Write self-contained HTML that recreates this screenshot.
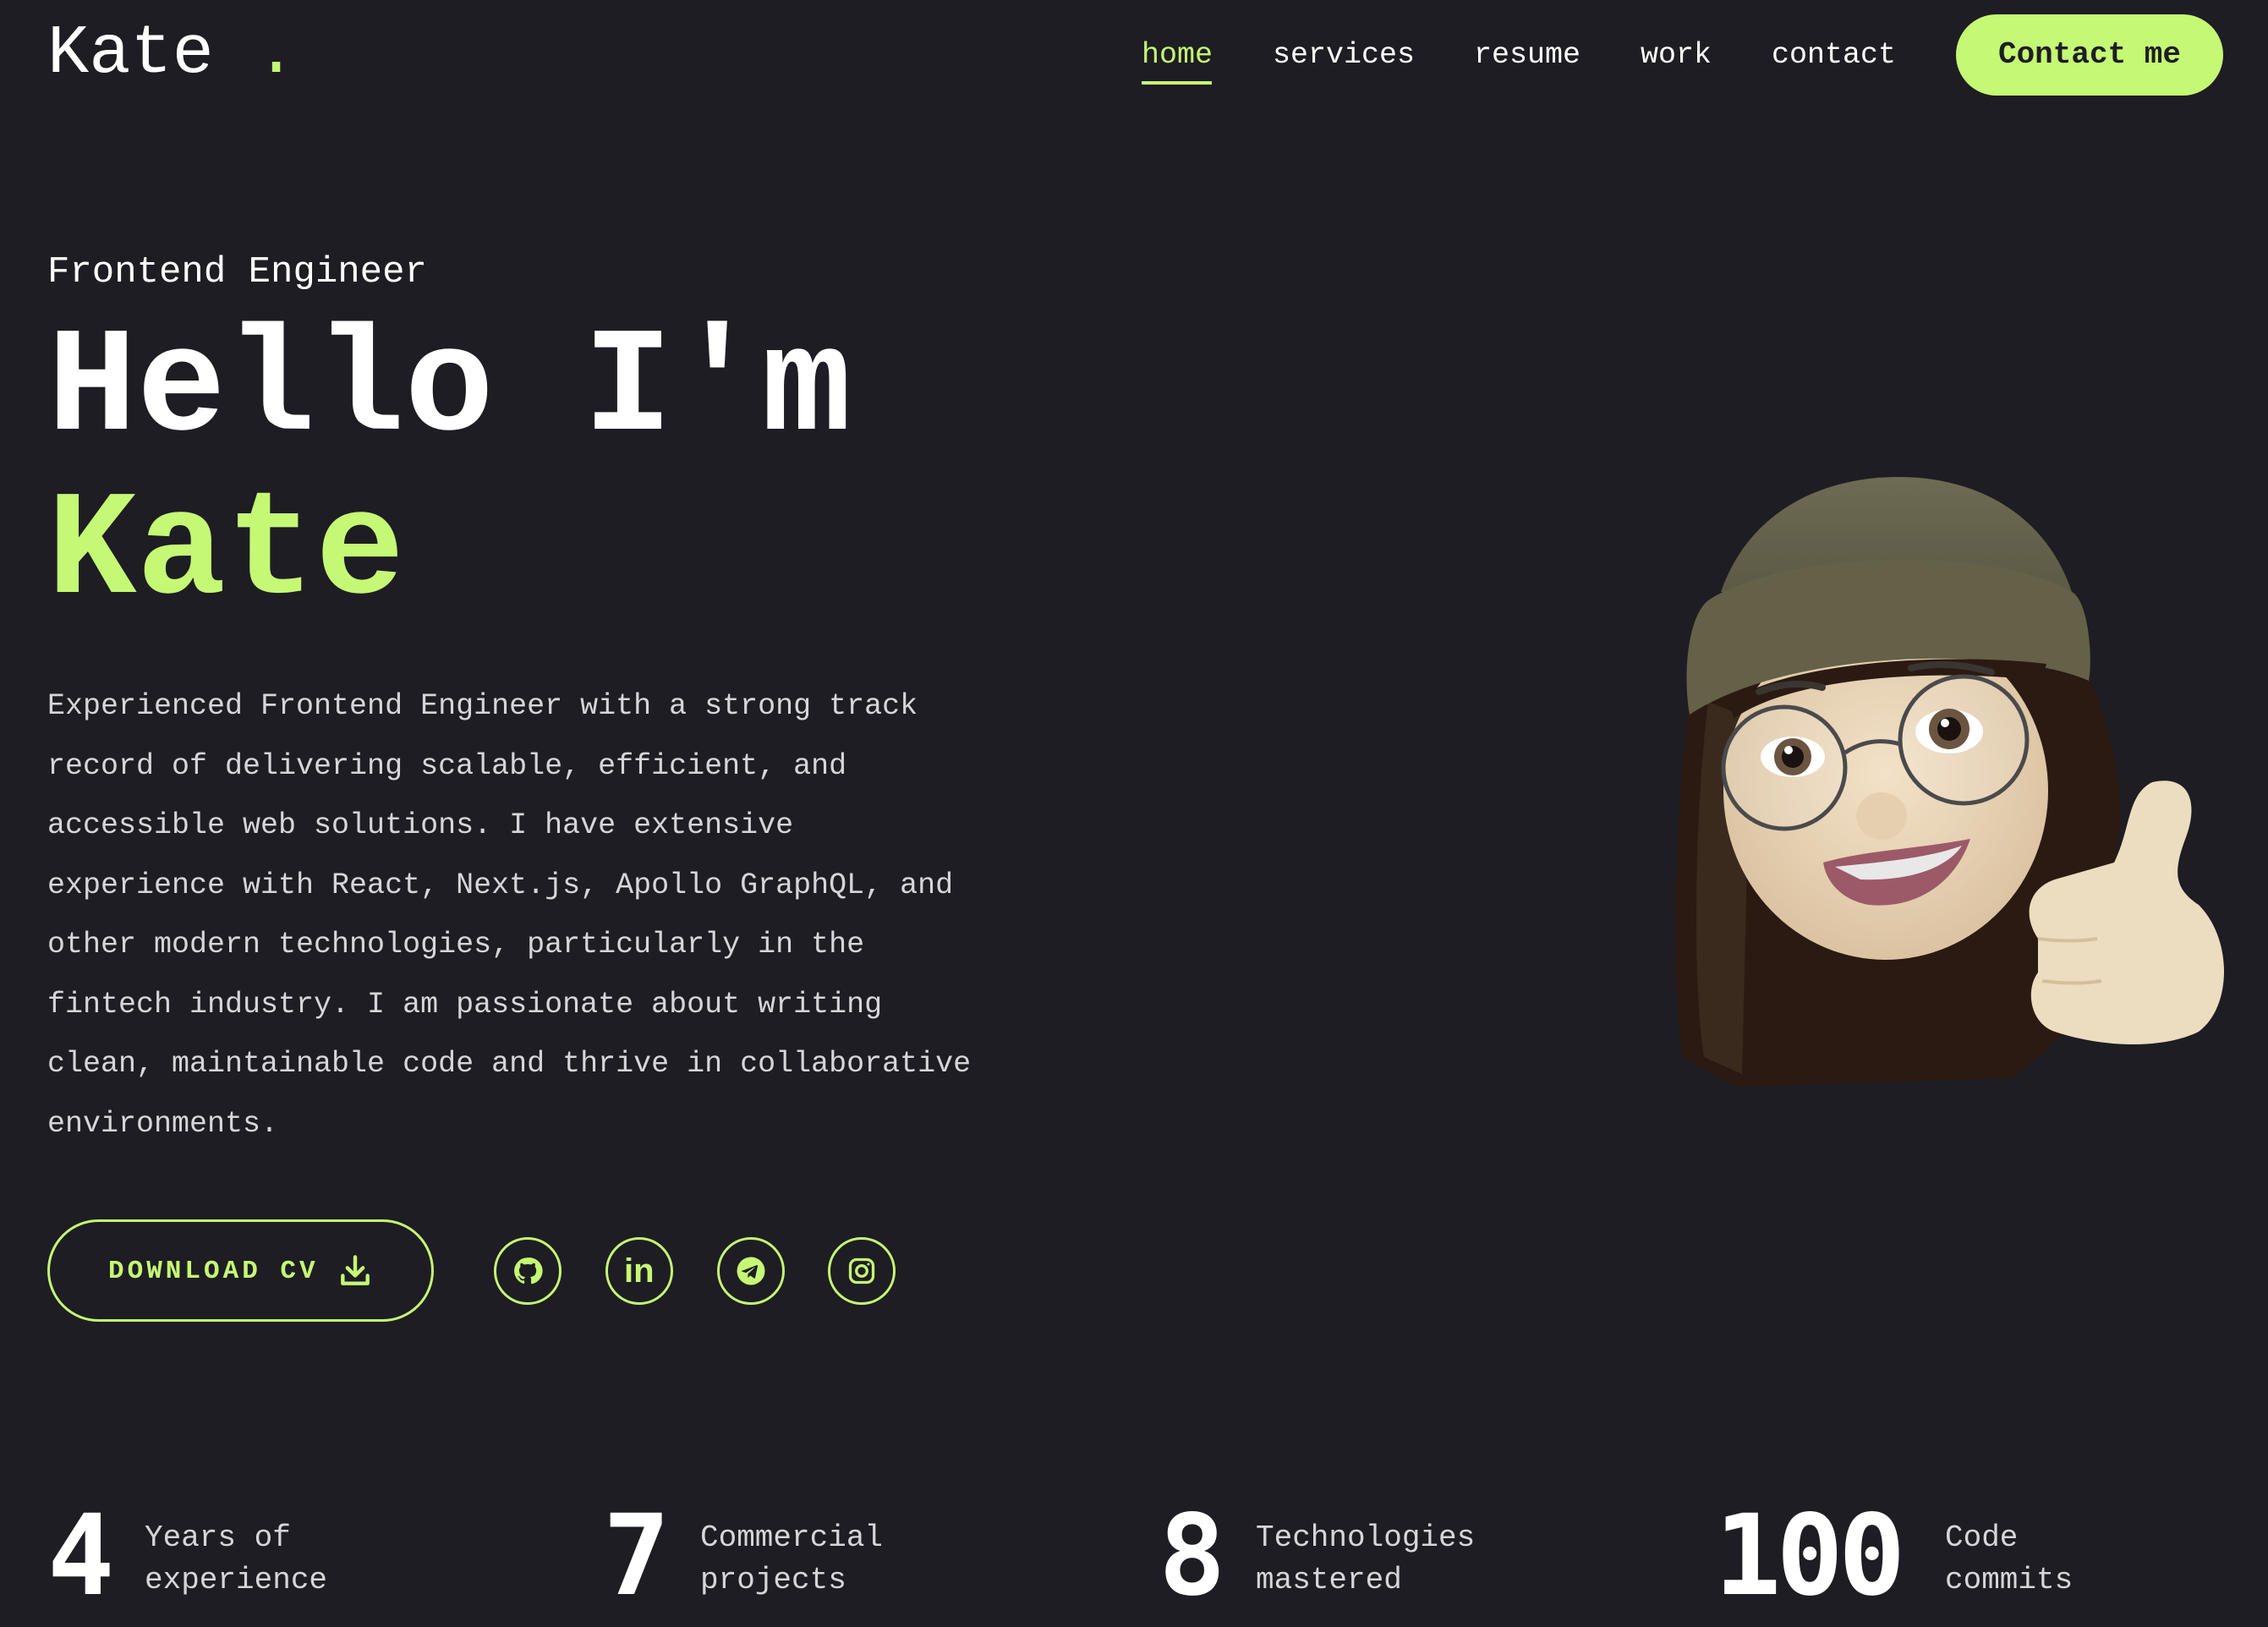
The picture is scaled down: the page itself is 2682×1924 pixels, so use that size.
<!DOCTYPE html>
<html><head><meta charset="utf-8"><style>
*{margin:0;padding:0;box-sizing:border-box}
body{width:2682px;height:1924px;background:#1e1d23;font-family:"Liberation Mono","DejaVu Sans Mono",monospace;color:#fff;position:relative;overflow:hidden}
.a{position:absolute;white-space:nowrap}
.g{color:#c5f874}
.n{position:absolute;top:40px;font-size:35px;line-height:50px}
</style></head><body>
<div class="a" style="left:56px;top:14px;font-size:82px;line-height:100px;">Kate <span class="g">.</span></div>
<div class="n g" style="left:1350px">home</div>
<div class="n" style="left:1505px">services</div>
<div class="n" style="left:1743px">resume</div>
<div class="n" style="left:1940px">work</div>
<div class="n" style="left:2095px">contact</div>
<div class="a" style="left:1350px;top:96px;width:83px;height:4px;background:#c5f874"></div>
<div class="a" style="left:2313px;top:17px;width:316px;height:96px;border-radius:48px;background:#c5f874;color:#1e1d23;font-size:36px;line-height:96px;text-align:center;font-weight:bold">Contact me</div>

<div class="a" style="left:56px;top:294px;font-size:44px;line-height:56px">Frontend Engineer</div>
<div class="a" style="left:56px;top:364px;font-size:176px;line-height:193px;font-weight:bold">Hello I'm<br><span class="g">Kate</span></div>
<div class="a" style="left:56px;top:800px;font-size:35px;line-height:70.5px;color:#d6d6da;white-space:normal;width:1200px">Experienced Frontend Engineer with a strong track<br>record of delivering scalable, efficient, and<br>accessible web solutions. I have extensive<br>experience with React, Next.js, Apollo GraphQL, and<br>other modern technologies, particularly in the<br>fintech industry. I am passionate about writing<br>clean, maintainable code and thrive in collaborative<br>environments.</div>

<div class="a" style="left:56px;top:1442px;width:457px;height:121px;border:3px solid #c5f874;border-radius:61px;"></div>
<div class="a g" style="left:128px;top:1482px;font-size:31px;line-height:44px;font-weight:bold;letter-spacing:4px">DOWNLOAD CV</div>
<svg class="a" style="left:398px;top:1480px" width="44" height="46" viewBox="0 0 24 24" fill="none" stroke="#c5f874" stroke-width="2.4" stroke-linecap="round" stroke-linejoin="round"><path d="M12 3v12M7 10l5 5 5-5M4 15v5h16v-5"/></svg>

<div class="a" style="left:584px;top:1463px;width:80px;height:80px;border:3px solid #c5f874;border-radius:50%"></div>
<div class="a" style="left:716px;top:1463px;width:80px;height:80px;border:3px solid #c5f874;border-radius:50%"></div>
<div class="a" style="left:848px;top:1463px;width:80px;height:80px;border:3px solid #c5f874;border-radius:50%"></div>
<div class="a" style="left:979px;top:1463px;width:80px;height:80px;border:3px solid #c5f874;border-radius:50%"></div>
<svg class="a" style="left:606px;top:1485px" width="36" height="36" viewBox="0 0 24 24"><path fill="#c5f874" d="M12 1.5a10.5 10.5 0 0 0-3.3 20.5c.5.1.7-.2.7-.5v-2c-2.9.6-3.500-1.3-3.5-1.3-.5-1.2-1.2-1.5-1.2-1.5-1-.7.1-.6.1-.6 1 .1 1.6 1.1 1.6 1.1.9 1.6 2.4 1.1 3 .9.1-.7.4-1.1.7-1.4-2.3-.3-4.8-1.2-4.8-5.2 0-1.100.4-2.1 1.1-2.8-.1-.3-.5-1.3.1-2.8 0 0 .9-.3 2.9 1.1a10 10 0 0 1 5.3 0c2-1.4 2.9-1.1 2.9-1.1.6 1.5.2 2.5.1 2.8.7.7 1.1 1.7 1.1 2.8 0 4-2.5 4.9-4.8 5.2.4.3.7 1 .7 2v3c0 .3.2.6.7.5A10.5 10.5 0 0 0 12 1.5z"/></svg>
<div class="a g" style="left:738px;top:1478px;font-size:40px;line-height:50px;font-weight:bold;font-family:'Liberation Sans',sans-serif">in</div>
<svg class="a" style="left:870px;top:1485px" width="36" height="36" viewBox="0 0 24 24"><circle cx="12" cy="12" r="11" fill="#c5f874"/><path fill="#1e1d23" d="M5.5 11.7l11-4.3c.5-.2 1 .1.8.9l-1.9 8.9c-.1.6-.5.8-1 .5l-2.9-2.1-1.4 1.3c-.2.2-.3.3-.6.3l.2-3 5.4-4.9c.2-.2 0-.3-.3-.1l-6.7 4.2-2.9-.9c-.6-.2-.6-.6.3-.8z"/></svg>
<svg class="a" style="left:1001px;top:1485px" width="36" height="36" viewBox="0 0 24 24" fill="none" stroke="#c5f874" stroke-width="2.2"><rect x="3" y="3" width="18" height="18" rx="5"/><circle cx="12" cy="12" r="4.2"/><circle cx="17.3" cy="6.7" r="1" fill="#c5f874" stroke="none"/></svg>

<div class="a" style="left:56px;top:1778px;font-size:132px;line-height:124px;font-weight:bold;font-family:'DejaVu Sans Mono',monospace">4</div>
<div class="a" style="left:171px;top:1794px;font-size:36px;line-height:50px;color:#d6d6da">Years of<br>experience</div>
<div class="a" style="left:713px;top:1778px;font-size:132px;line-height:124px;font-weight:bold;font-family:'DejaVu Sans Mono',monospace">7</div>
<div class="a" style="left:828px;top:1794px;font-size:36px;line-height:50px;color:#d6d6da">Commercial<br>projects</div>
<div class="a" style="left:1370px;top:1778px;font-size:132px;line-height:124px;font-weight:bold;font-family:'DejaVu Sans Mono',monospace">8</div>
<div class="a" style="left:1485px;top:1794px;font-size:36px;line-height:50px;color:#d6d6da">Technologies<br>mastered</div>
<div class="a" style="left:2027px;top:1778px;font-size:132px;line-height:124px;font-weight:bold;font-family:'DejaVu Sans Mono',monospace;letter-spacing:-6px">100</div>
<div class="a" style="left:2300px;top:1794px;font-size:36px;line-height:50px;color:#d6d6da">Code<br>commits</div>

<svg class="a" style="left:1960px;top:550px" width="700" height="750" viewBox="0 0 700 750">
<defs>
<radialGradient id="sk" cx="0.5" cy="0.45" r="0.6"><stop offset="0" stop-color="#f3e2c8"/><stop offset="1" stop-color="#d9c09e"/></radialGradient>
<linearGradient id="ht" x1="0" y1="0" x2="0" y2="1"><stop offset="0" stop-color="#6e6a54"/><stop offset="1" stop-color="#5c5a44"/></linearGradient>
</defs>
<path d="M40 260 C20 400 15 620 30 700 L90 735 L420 725 L520 640 L548 420 C545 330 520 260 500 240 Z" fill="#2a1a12"/>
<path d="M60 280 C45 400 40 600 55 700 L100 720 L110 300Z" fill="#3a2a1e"/>
<ellipse cx="270" cy="385" rx="192" ry="200" fill="url(#sk)"/>
<path d="M75 150 C110 50 200 14 285 14 C380 14 460 60 490 150 Z" fill="url(#ht)"/>
<path d="M60 160 C150 100 400 95 490 150 C510 160 515 230 510 255 C420 215 160 215 38 295 C30 250 35 180 60 160 Z" fill="#646148"/>
<path d="M85 280 C150 235 330 220 460 235 L455 255 C330 240 160 250 90 300Z" fill="#2a1a12"/>
<path d="M120 268 q40 -15 75 -5" stroke="#3a3530" stroke-width="8" fill="none" stroke-linecap="round"/>
<path d="M300 240 q45 -10 95 5" stroke="#3a3530" stroke-width="8" fill="none" stroke-linecap="round"/>
<circle cx="150" cy="358" r="72" fill="rgba(255,255,255,0.12)" stroke="#4a4a4c" stroke-width="5"/>
<circle cx="362" cy="325" r="75" fill="rgba(255,255,255,0.12)" stroke="#4a4a4c" stroke-width="5"/>
<path d="M222 340 q30 -20 65 -10" stroke="#4a4a4c" stroke-width="5" fill="none"/>
<ellipse cx="160" cy="345" rx="38" ry="24" fill="#fff"/><circle cx="160" cy="345" r="22" fill="#6b5440"/><circle cx="160" cy="345" r="13" fill="#1a1210"/><circle cx="155" cy="337" r="5" fill="#fff"/>
<ellipse cx="345" cy="315" rx="40" ry="26" fill="#fff"/><circle cx="345" cy="312" r="24" fill="#6b5440"/><circle cx="345" cy="312" r="14" fill="#1a1210"/><circle cx="340" cy="305" r="5" fill="#fff"/>
<ellipse cx="265" cy="415" rx="30" ry="28" fill="#e6cfae"/>
<path d="M196 470 C250 455 300 455 370 442 C350 500 300 525 250 520 C220 515 200 495 196 470Z" fill="#9c5a68"/>
<path d="M210 475 C260 470 320 465 360 450 C340 480 290 492 240 490 Z" fill="#e8e8e8"/>
<path d="M450 560 C430 530 440 500 470 490 L540 470 C560 430 555 390 585 375 C630 365 640 400 625 440 C610 480 610 500 640 520 C680 560 680 640 640 670 C600 690 530 690 470 670 C440 660 435 620 450 600 Z" fill="#ecdcc0"/>
<path d="M450 560 q40 5 70 0 M455 610 q40 5 70 0" stroke="#d4bf9c" stroke-width="4" fill="none"/>
</svg>
</body></html>
